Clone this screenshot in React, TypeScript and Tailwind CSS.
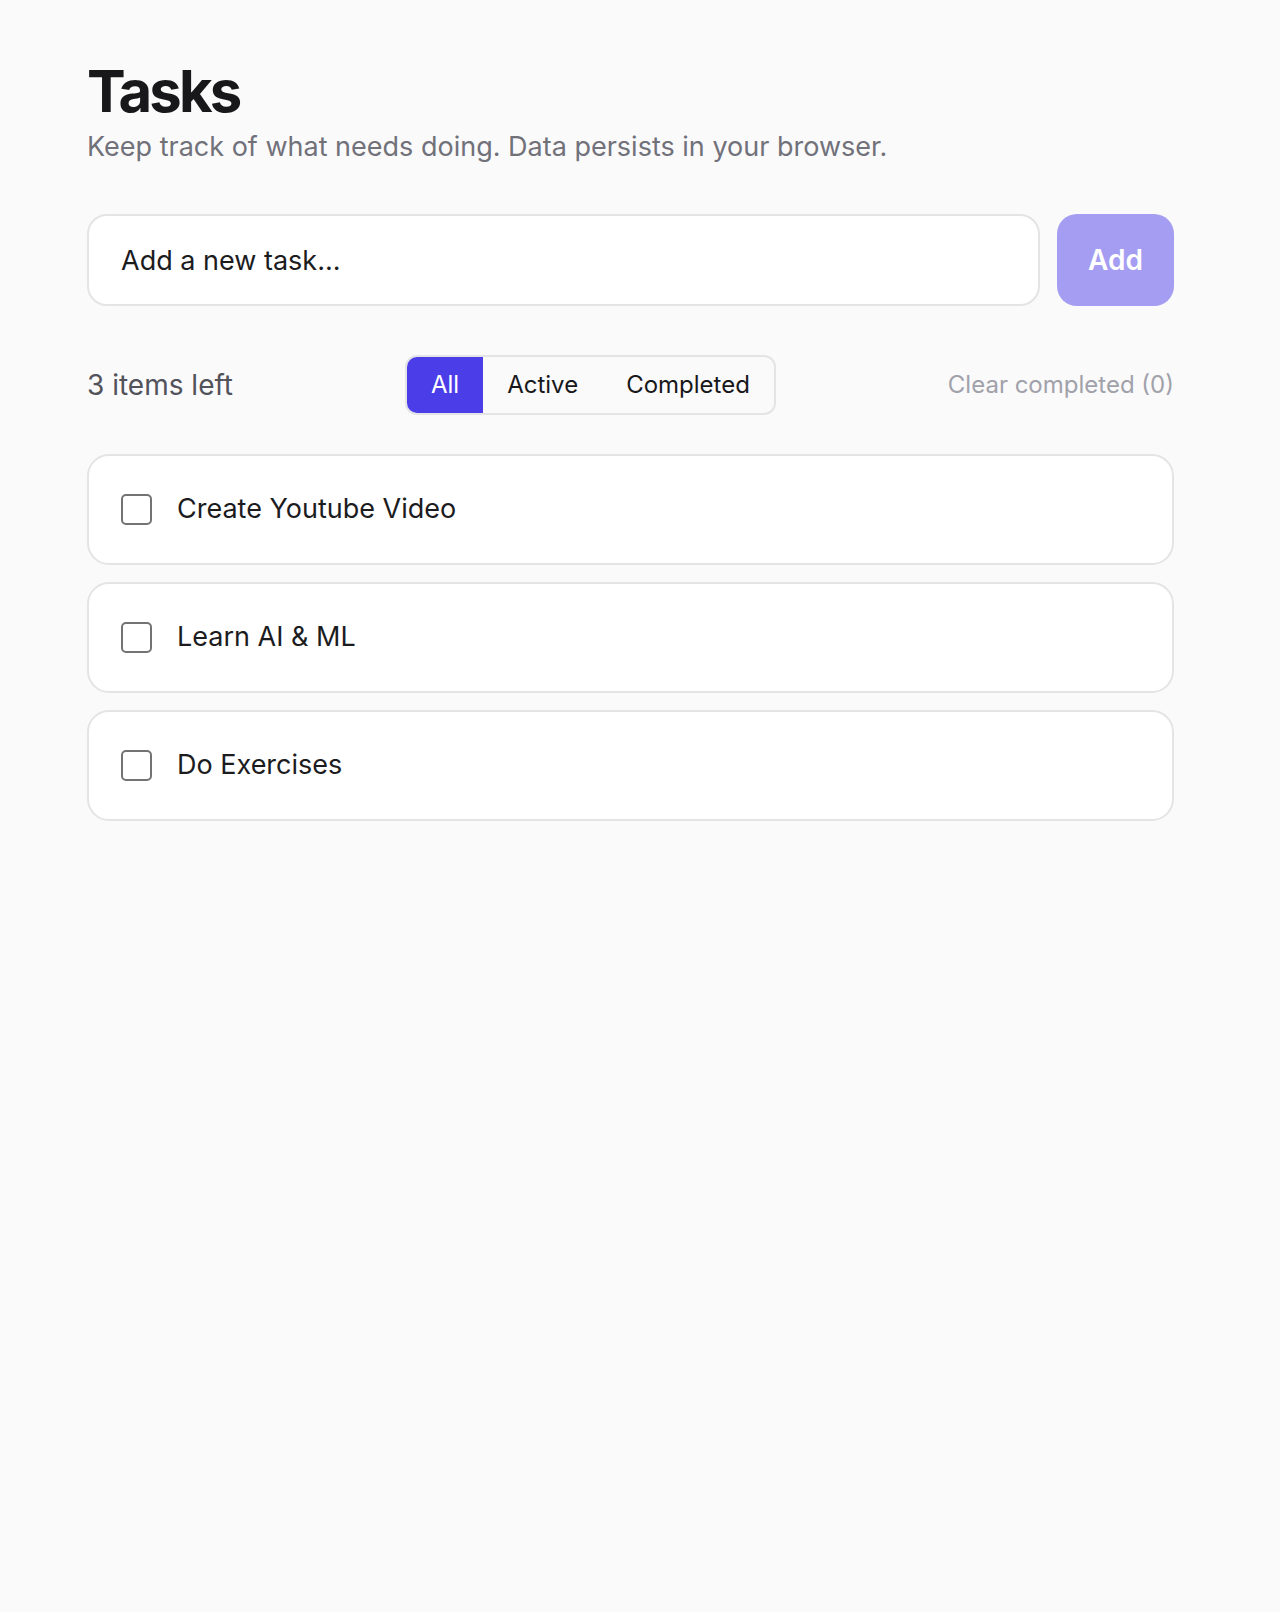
import { useState } from "react";

interface Task {
  id: number;
  text: string;
  done: boolean;
}

type Filter = "all" | "active" | "completed";

const initialTasks: Task[] = [
  { id: 1, text: "Create Youtube Video", done: false },
  { id: 2, text: "Learn AI & ML", done: false },
  { id: 3, text: "Do Exercises", done: false },
];

export default function App() {
  const [tasks, setTasks] = useState<Task[]>(initialTasks);
  const [draft, setDraft] = useState("");
  const [filter, setFilter] = useState<Filter>("all");

  const left = tasks.filter((t) => !t.done).length;
  const doneCount = tasks.length - left;
  const visible = tasks.filter((t) =>
    filter === "all" ? true : filter === "active" ? !t.done : t.done
  );

  const addTask = () => {
    const text = draft.trim();
    if (!text) return;
    setTasks([...tasks, { id: Date.now(), text, done: false }]);
    setDraft("");
  };

  const toggle = (id: number) =>
    setTasks(tasks.map((t) => (t.id === id ? { ...t, done: !t.done } : t)));

  const filters: { key: Filter; label: string }[] = [
    { key: "all", label: "All" },
    { key: "active", label: "Active" },
    { key: "completed", label: "Completed" },
  ];

  return (
    <div className="min-h-[1612px] bg-[#fafafa] font-['Inter',sans-serif]">
      <div className="ml-[87px] w-[1087px] pt-[59px]">
        {/* Header */}
        <h1 className="text-[58px] leading-[64px] font-bold tracking-[-0.05em] text-[#18181b]">Tasks</h1>
        <p className="mt-[6px] text-[27px] leading-[36px] text-[#71717a]">
          Keep track of what needs doing. Data persists in your browser.
        </p>

        {/* New task */}
        <div className="mt-[49px] flex gap-[17px]">
          <input
            value={draft}
            onChange={(e) => setDraft(e.target.value)}
            onKeyDown={(e) => e.key === "Enter" && addTask()}
            placeholder="Add a new task..."
            className="h-[92px] flex-1 rounded-[20px] border-2 border-[#e4e4e7] bg-white px-[32px] text-[27px] text-[#18181b] outline-none placeholder:text-[#1c1c1e]"
          />
          <button
            onClick={addTask}
            disabled={!draft.trim()}
            className="h-[92px] w-[117px] rounded-[20px] bg-[#a49df2] text-[28px] font-semibold text-white"
          >
            Add
          </button>
        </div>

        {/* Filters */}
        <div className="mt-[49px] flex items-center justify-between">
          <span className="text-[28px] text-[#52525b]">
            {left} items left
          </span>
          <div className="flex h-[60px] overflow-hidden rounded-[12px] border-2 border-[#e4e4e7] bg-[#fafafa]">
            {filters.map((f) => (
              <button
                key={f.key}
                onClick={() => setFilter(f.key)}
                className={
                  filter === f.key
                    ? "bg-[#4b3de8] px-[24px] text-[24px] text-white"
                    : "px-[24px] text-[24px] text-[#18181b]"
                }
              >
                {f.label}
              </button>
            ))}
          </div>
          <button className="text-[24px] text-[#a1a1aa]">Clear completed ({doneCount})</button>
        </div>

        {/* Task list */}
        <ul className="mt-[39px] flex flex-col gap-[17px]">
          {visible.map((t) => (
            <li
              key={t.id}
              className="flex h-[111px] items-center gap-[25px] rounded-[22px] border-2 border-[#e4e4e7] bg-white px-[32px]"
            >
              <button
                onClick={() => toggle(t.id)}
                className="h-[31px] w-[31px] shrink-0 rounded-[5px] border-2 border-[#737373] bg-white"
              />
              <span className="text-[27px] text-[#1c1c1e]">{t.text}</span>
            </li>
          ))}
        </ul>
      </div>
    </div>
  );
}
